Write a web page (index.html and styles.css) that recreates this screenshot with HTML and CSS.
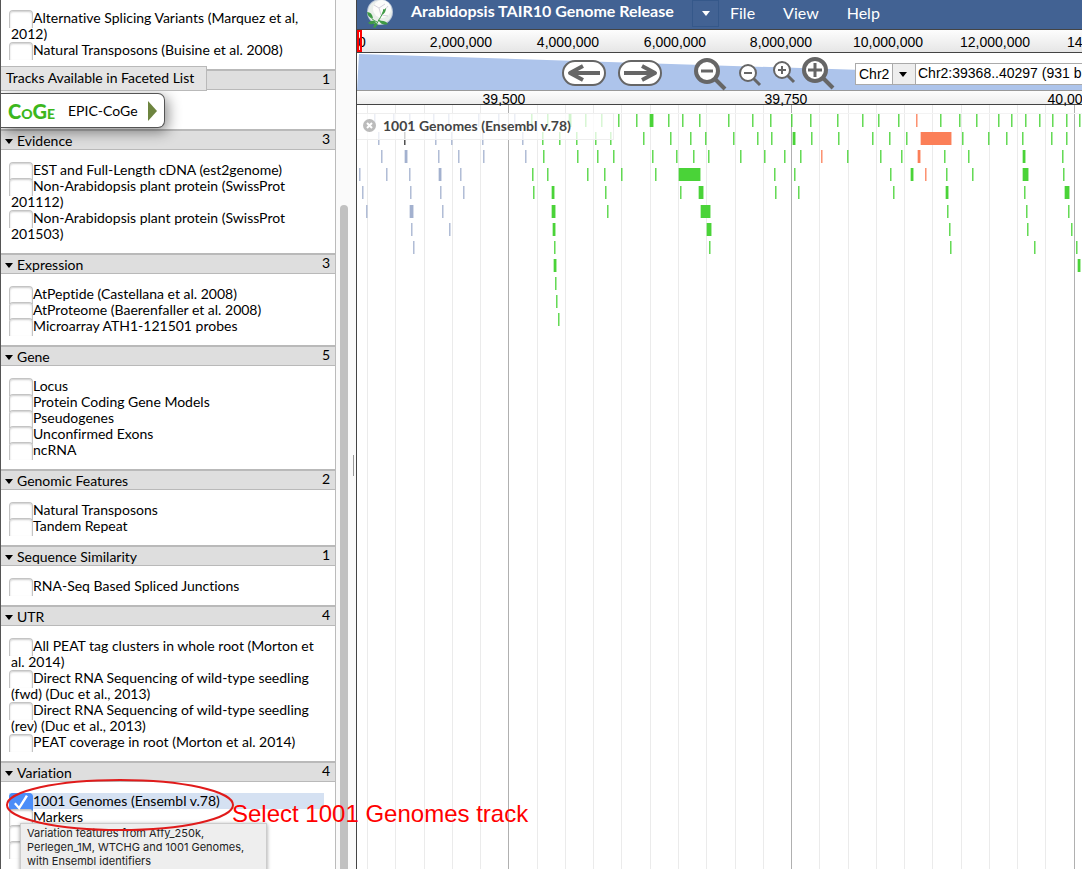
FILE: index.html
```
<!DOCTYPE html>
<html lang="en">
<head>
<meta charset="utf-8">
<title>Arabidopsis TAIR10 Genome Release</title>
<link rel="stylesheet" href="styles.css">
</head>
<body>
<div class="app">
  <aside class="tracks">
    <section class="cat first">
      <ul>
        <li><label><input type="checkbox">Alternative Splicing Variants (Marquez et al, 2012)</label></li>
        <li><label><input type="checkbox">Natural Transposons (Buisine et al. 2008)</label></li>
      </ul>
    </section>
    <section class="cat">
      <h2><span class="faceted">Tracks Available in Faceted List</span><span class="count">1</span></h2>
      <button class="epic" type="button"><span class="coge">CoGe</span><span>EPIC-CoGe</span><span class="go"></span></button>
    </section>
    <section class="cat">
      <h2><i class="tri"></i>Evidence<span class="count">3</span></h2>
      <ul>
        <li><label><input type="checkbox">EST and Full-Length cDNA (est2genome)</label></li>
        <li><label><input type="checkbox">Non-Arabidopsis plant protein (SwissProt 201112)</label></li>
        <li><label><input type="checkbox">Non-Arabidopsis plant protein (SwissProt 201503)</label></li>
      </ul>
    </section>
    <section class="cat">
      <h2><i class="tri"></i>Expression<span class="count">3</span></h2>
      <ul>
        <li><label><input type="checkbox">AtPeptide (Castellana et al. 2008)</label></li>
        <li><label><input type="checkbox">AtProteome (Baerenfaller et al. 2008)</label></li>
        <li><label><input type="checkbox">Microarray ATH1-121501 probes</label></li>
      </ul>
    </section>
    <section class="cat">
      <h2><i class="tri"></i>Gene<span class="count">5</span></h2>
      <ul>
        <li><label><input type="checkbox">Locus</label></li>
        <li><label><input type="checkbox">Protein Coding Gene Models</label></li>
        <li><label><input type="checkbox">Pseudogenes</label></li>
        <li><label><input type="checkbox">Unconfirmed Exons</label></li>
        <li><label><input type="checkbox">ncRNA</label></li>
      </ul>
    </section>
    <section class="cat">
      <h2><i class="tri"></i>Genomic Features<span class="count">2</span></h2>
      <ul>
        <li><label><input type="checkbox">Natural Transposons</label></li>
        <li><label><input type="checkbox">Tandem Repeat</label></li>
      </ul>
    </section>
    <section class="cat">
      <h2><i class="tri"></i>Sequence Similarity<span class="count">1</span></h2>
      <ul>
        <li><label><input type="checkbox">RNA-Seq Based Spliced Junctions</label></li>
      </ul>
    </section>
    <section class="cat">
      <h2><i class="tri"></i>UTR<span class="count">4</span></h2>
      <ul>
        <li><label><input type="checkbox">All PEAT tag clusters in whole root (Morton et al. 2014)</label></li>
        <li><label><input type="checkbox">Direct RNA Sequencing of wild-type seedling (fwd) (Duc et al., 2013)</label></li>
        <li><label><input type="checkbox">Direct RNA Sequencing of wild-type seedling (rev) (Duc et al., 2013)</label></li>
        <li><label><input type="checkbox">PEAT coverage in root (Morton et al. 2014)</label></li>
      </ul>
    </section>
    <section class="cat variation">
      <h2><i class="tri"></i>Variation<span class="count">4</span></h2>
      <ul>
        <li class="on"><label><input type="checkbox" checked>1001 Genomes (Ensembl v.78)</label></li>
        <li><label><input type="checkbox">Markers</label></li>
        <li><input type="checkbox" aria-label="Variation track 3"></li>
        <li><input type="checkbox" aria-label="Variation track 4"></li>
      </ul>
    </section>
  </aside>
  <div class="scroll"><div class="thumb"></div></div>
  <div class="splitter"><div class="grip"></div></div>
  <main class="browser">
    <header class="menubar">
      <svg class="logo" width="30" height="29" viewBox="0 0 30 29" aria-hidden="true">
        <circle cx="15" cy="12" r="13" fill="#b9c5d8"/>
        <circle cx="15" cy="12" r="12" fill="#e9eeea"/>
        <circle cx="17" cy="9" r="9" fill="#fcfcfa"/>
        <path d="M9 5l5 3 6-4M14 8l2 7 7 1M23 6l-4 5" stroke="#d5d3dc" fill="none"/>
        <path d="M10 28C11 23 17 17 19 9M12 22C8 20 5 18 4 13M13 20l9 4" stroke="#3f9a45" stroke-width="1" fill="none"/>
        <path d="M2 12q5 0 6 6-5 0-6-6zM11 22q-4-3-8 1 4 3 8-1zM14 21q6-1 9 3-6 2-9-3zM17 15q1-5 4-7 0 5-4 7zM10 22l-2 6 5-3z" fill="#3f9a45"/>
      </svg>
      <h1>Arabidopsis TAIR10 Genome Release</h1>
      <button class="drop" type="button" aria-label="Choose dataset"><i></i></button>
      <nav><button type="button">File</button><button type="button">View</button><button type="button">Help</button></nav>
    </header>
    <div class="overview">
      <svg width="100%" height="22"><g class="ruler" text-anchor="middle">
        <text x="5" y="17">0</text><text x="104" y="17">2,000,000</text><text x="211" y="17">4,000,000</text><text x="318" y="17">6,000,000</text><text x="424" y="17">8,000,000</text><text x="531" y="17">10,000,000</text><text x="638" y="17">12,000,000</text><text x="745" y="17">14,000,000</text></g></svg>
      <div class="here"></div>
    </div>
    <div class="navbar">
      <svg class="wedge" viewBox="0 0 725 37" preserveAspectRatio="none"><path d="M2 1L725 24V37H0z" fill="#adc4eb"/></svg>
      <div class="tools">
        <button type="button" aria-label="Pan left"><svg width="46" height="28" viewBox="0 0 46 28"><rect x="2" y="2" width="42" height="24" rx="12" fill="#fff" stroke="#666" stroke-width="2"/><path d="M39 14H9M22 7L9 14l13 7" fill="none" stroke="#666" stroke-width="4" stroke-linejoin="round"/></svg></button>
        <button type="button" class="right" aria-label="Pan right"><svg width="46" height="28" viewBox="0 0 46 28"><rect x="2" y="2" width="42" height="24" rx="12" fill="#fff" stroke="#666" stroke-width="2"/><path d="M7 14h30M25 7l13 7-13 7" fill="none" stroke="#666" stroke-width="4" stroke-linejoin="round"/></svg></button>
        <button type="button" class="zo" aria-label="Zoom out far"><svg width="34" height="34" viewBox="0 0 34 34"><path d="M21 21L31 31" stroke="#666" stroke-width="4"/><circle cx="13" cy="13" r="11" fill="#fff" stroke="#666" stroke-width="4"/><path d="M7 13h12" stroke="#666" stroke-width="3"/></svg></button>
        <button type="button" class="zs" aria-label="Zoom out"><svg width="24" height="24" viewBox="0 0 24 24"><path d="M15 15L22 22" stroke="#666" stroke-width="3"/><circle cx="10" cy="10" r="8" fill="#fff" stroke="#666" stroke-width="2"/><path d="M6 10h8" stroke="#666" stroke-width="2"/></svg></button>
        <button type="button" class="zt" aria-label="Zoom in"><svg width="24" height="24" viewBox="0 0 24 24"><path d="M15 15L22 22" stroke="#666" stroke-width="3"/><circle cx="10" cy="10" r="8" fill="#fff" stroke="#666" stroke-width="2"/><path d="M6 10h8M10 6v8" stroke="#666" stroke-width="2"/></svg></button>
        <button type="button" class="zi" aria-label="Zoom in far"><svg width="34" height="34" viewBox="0 0 34 34"><path d="M22 22L32 32" stroke="#666" stroke-width="4"/><circle cx="14" cy="14" r="11" fill="#fff" stroke="#666" stroke-width="4"/><path d="M7 14h14M14 7v14" stroke="#666" stroke-width="3"/></svg></button>
        <div class="chr"><select aria-label="Reference sequence"><option>Chr2</option></select><i></i></div>
        <input class="loc" type="text" aria-label="Location" value="Chr2:39368..40297 (931 b">
      </div>
    </div>
    <div class="scale">
      <svg width="100%" height="14"><g class="ruler" text-anchor="middle"><text x="147" y="13">39,500</text><text x="429" y="13">39,750</text><text x="712" y="13">40,000</text></g></svg>
    </div>
    <div class="view">
      <svg id="features" width="100%" height="100%" aria-label="Variation features"></svg>
      <div class="tlabel"><svg width="13" height="13" viewBox="0 0 13 13"><circle cx="6.5" cy="6.5" r="6.5" fill="#bbb"/><path d="M4 4l5 5M9 4l-5 5" stroke="#fff" stroke-width="2"/></svg><span>1001 Genomes (Ensembl v.78)</span></div>
    </div>
  </main>
  <div class="tip">Variation features from Affy_250k,<br>Perlegen_1M, WTCHG and 1001 Genomes,<br>with Ensembl identifiers</div>
  <svg class="ring" width="230" height="54" viewBox="0 0 230 54" aria-hidden="true"><ellipse cx="115" cy="27" rx="113" ry="25" fill="none" stroke="#e01b1b" stroke-width="2"/></svg>
  <div class="note">Select 1001 Genomes track</div>
</div>
<script src="tracks.js"></script>
</body>
</html>
```
FILE: styles.css
```
* { box-sizing: border-box; }
body { margin: 0; background: #fff; font: 14px/16px "Lato", sans-serif; font-variant-ligatures: none; color: #000; }
button { margin: 0; padding: 0; border: 0; background: none; font: inherit; color: inherit; display: block; }
svg { display: block; }
.app { display: flex; height: 100vh; position: relative; overflow: hidden; }
.tracks { width: 336px; flex: none; height: 100%; overflow: hidden; border-left: 1px solid #555; border-right: 1px solid #bbb; }
.cat h2 { margin: 0; height: 21px; display: flex; align-items: center; border-top: 2px solid #b9b9b9; border-bottom: 1px solid #b9b9b9; background: #dedede; font-size: 14px; font-weight: 400; padding: 2px 5px 0 4px; position: relative; }
.tri { border: 4px solid transparent; border-top: 5px solid #000; border-bottom: 0; margin-right: 4px; }
.count { margin-left: auto; padding-bottom: 4px; }
.cat ul { list-style: none; margin: 0; padding: 12px 11px 11px 10px; }
.first ul { padding-top: 10px; }
.variation ul { padding-top: 11px; }
.cat li { min-height: 16px; }
.cat input { appearance: none; width: 24px; height: 18px; margin: 0 0 -2px -2px; vertical-align: top; border: 1px solid #c4c4c4; border-bottom: 0; border-radius: 4px 4px 0 0; background: #fff; box-shadow: inset 0 1px 2px #ccc; }
.cat .on { background: #d5e1f2; margin-left: -2px; padding-left: 2px; }
.cat .on input { background: #4b8df8; border-color: #4b8df8; box-shadow: none; }
.cat .on input::before { content: ""; display: block; width: 14px; height: 15px; background: #fff; margin: 1px 0 0 4px; clip-path: polygon(0 60%, 12% 50%, 35% 75%, 85% 0, 100% 8%, 38% 100%); }
.faceted { position: absolute; left: 0; top: -5px; width: 206px; height: 25px; padding: 3px 4px 0 5px; border: 1px solid #b9b9b9; border-left: 0; background: #e4e4e4; z-index: 3; }
.epic { margin: 3px 0 1px; width: 164px; height: 35px; display: flex; align-items: center; border: 1px solid #555; border-left: 0; border-radius: 0 7px 7px 0; background: #fff; box-shadow: 3px 4px 14px rgba(0,0,0,.45); position: relative; z-index: 2; padding-left: 7px; }
.coge { font: small-caps 900 20px/20px "Lato", sans-serif; color: #3cb71c; width: 60px; text-align: left; }
.go { border: 10px solid transparent; border-left: 9px solid #6d843f; border-right: 0; margin-left: auto; margin-right: 7px; }
.scroll { width: 12px; flex: none; background: #fafafa; padding: 205px 0 0 4px; }
.thumb { width: 8px; height: 100%; background: #c1c1c1; border-radius: 4px 4px 0 0; }
.splitter { width: 8px; flex: none; background: #fafafa; display: flex; align-items: center; padding: 62px 0 0 5px; }
.grip { width: 1px; height: 21px; background: #999; }
.browser { flex: 1; min-width: 0; display: flex; flex-direction: column; border-left: 1px solid #444; overflow: hidden; }
.menubar { height: 29px; flex: none; background: #426293; color: #fff; display: flex; align-items: flex-start; padding-left: 8px; }
.logo { flex: none; }
h1 { margin: 0 0 0 16px; font: 700 16px/22px "Lato", sans-serif; white-space: nowrap; width: 270px; }
.drop { width: 27px; height: 27px; margin-left: 11px; border: 1px solid #35588a; display: grid; place-items: center; }
.drop i, .chr i { border: 4px solid transparent; border-top: 5px solid #fff; border-bottom: 0; }
nav { display: flex; gap: 28px; margin-left: 11px; font-size: 16px; line-height: 25px; }
.overview { height: 24px; flex: none; border-top: 1px solid #444; border-bottom: 1px solid #444; background: linear-gradient(#fdfdfd, #e6e6e6); position: relative; }
.ruler { font: 14px "Liberation Sans", Arial, sans-serif; }
.here { position: absolute; left: 0; top: 0; width: 5px; height: 22px; border: 2px solid #f00; }
.navbar { height: 37px; flex: none; position: relative; }
.wedge { position: absolute; left: 0; top: 0; width: 100%; height: 37px; }
.tools { position: relative; display: flex; align-items: flex-start; padding: 6px 0 0 204px; }
.tools > * { flex: none; }
.right { margin-left: 10px; }
.tools .zo { margin: -1px 0 0 31px; }
.tools .zs { margin: 4px 0 0 10px; }
.tools .zt { margin: 1px 0 0 10px; }
.tools .zi { margin: -3px 0 0 5px; }
.chr { position: relative; width: 61px; height: 22px; margin: 4px 0 0 20px; }
.chr select { appearance: none; width: 100%; height: 22px; border: 1px solid #aaa; border-radius: 0; background: linear-gradient(90deg, #fff 36px, #aaa 36px, #aaa 37px, #eee 37px); padding: 0 0 0 3px; font: 14px "Liberation Sans", Arial, sans-serif; color: #000; }
.chr i { position: absolute; right: 9px; top: 9px; border-top-color: #000; }
.loc { width: 180px; height: 22px; margin: 4px 0 0 -1px; border: 1px solid #aaa; background: #fff; padding: 0 2px 3px; font: 14px "Liberation Sans", Arial, sans-serif; color: #000; }
.scale { height: 15px; flex: none; border-top: 1px solid #999; border-bottom: 1px solid #444; background: linear-gradient(#fdfdfd, #eee); }
.scale svg { overflow: visible; }
.view { flex: 1; min-height: 0; position: relative; }
.tlabel { position: absolute; left: 0; top: 8px; width: 257px; height: 27px; display: flex; align-items: center; gap: 7px; padding: 0 0 2px 6px; background: rgba(255,255,255,.75); border: 1px solid #eee; border-left: 0; font-weight: 700; color: #444; white-space: nowrap; }
.tip { position: absolute; left: 20px; top: 823px; width: 247px; height: 60px; padding: 2px 6px; background: #eee; border: 1px solid #ccc; box-shadow: 0 1px 4px rgba(0,0,0,.4); font: 11px/14px "Inter", "Liberation Sans", sans-serif; color: #222; white-space: nowrap; }
.ring { position: absolute; left: 5px; top: 778px; }
.note { position: absolute; left: 232px; top: 800px; font: 24px/28px "Liberation Sans", Arial, sans-serif; color: #f00; white-space: nowrap; }
```
FILE: tracks.js
```
// Each row lists features as "x[:width][colour]"; colour g (default), b, o, k.
const ORIGIN = 357;
const FIRST_ROW = 9;
const COLOURS = { g: "#4ad338", b: "#a3b1cf", o: "#fb7f58", k: "#333" };
const ROWS = [
  "374b 393b 409b 433b 448b 478b 498b 514b 531 547 569:2 585 601 618 636 650:3 668 682 699 728 752 770 791 810 837 862 878 898 916o 940 959 976 998 1011 1025 1039 1052 1066 1079",
  "378b 404k 435b 451b 482b 522b 542 559 576 595 610 643 670 690 705 733 757 771 793:2 811 838 872 889 906 921:30o 962 988 1006 1022 1051 1066",
  "381b 405:2b 438b 458b 483b 525b 543 577 597 613 652 676 693 708 740 764 784 800 821o 847 880 901 918:2o 944 968 1023:2 1062",
  "359b 386b 409b 439:2b 460b 532 547 587 604 621 655 679:21 774 794 890 911:2 925o 946 972 1023:5 1063",
  "362b 410b 440b 463b 533 552:2 605 680 699:4 775 798 893 946:2 1024 1065:4",
  "366b 410:3b 442b 552:3 607 701:9 947 1026 1068",
  "411b 449b 553:2 707:4 949 1027 1071",
  "413b 554 709 950 1034 1076",
  "554:2 1078:2", "555", "556", "558"
];
const svg = document.getElementById("features");
function rect(x, y, w, h, fill, opacity) {
  const r = document.createElementNS("http://www.w3.org/2000/svg", "rect");
  const a = { x, y, width: w, height: h, fill, opacity };
  for (const k in a) r.setAttribute(k, a[k]);
  svg.appendChild(r);
}
for (let i = 0; i < 26; i++) {
  rect(Math.round(10 + i * 28.27), 0, 1, "100%", i % 10 === 5 ? "#b0b0b0" : "#ebebeb", 1);
}
rect(0, 8, "100%", 1, "#f3f3f3", 1);
ROWS.forEach((row, n) => {
  const y = Math.round(FIRST_ROW + n * 18.1);
  row.split(" ").forEach(f => {
    const [, x, w, c] = f.match(/^(\d+)(?::(\d+))?([bok])?$/);
    const left = x - ORIGIN, width = +(w || 1), fill = COLOURS[c || "g"];
    rect(left, y, width, 13, fill, width > 1 ? 1 : 0.85);
    rect(left + width, y, 1, 13, fill, 0.45);
    if (width > 1) rect(left - 1, y, 1, 13, fill, 0.35);
  });
});
```
